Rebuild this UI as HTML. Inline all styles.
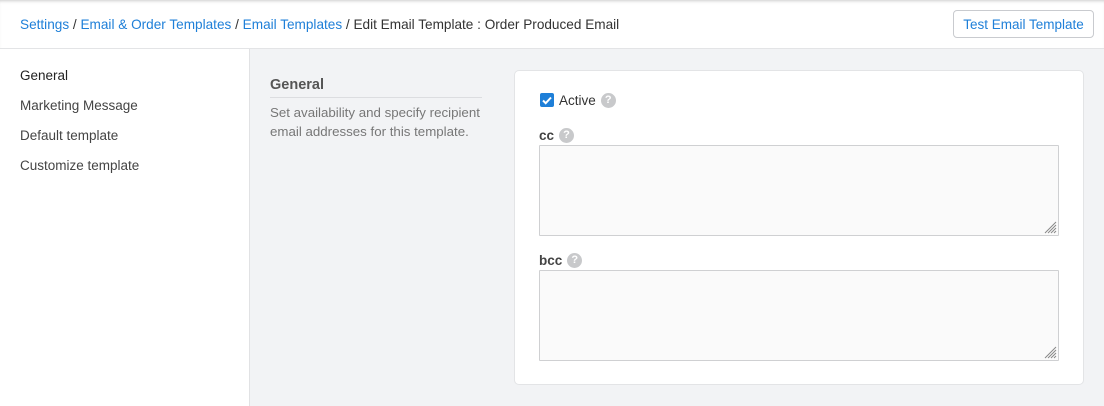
<!DOCTYPE html>
<html><head><style>
*{box-sizing:border-box;margin:0;padding:0}
body{width:1104px;height:406px;overflow:hidden;font-family:"Liberation Sans",sans-serif;font-size:13.5px;color:#333;background:#f2f3f5;position:relative}
.hdr{position:absolute;left:0;top:0;width:1104px;height:49px;background:#fff;border-bottom:1px solid #e3e4e6;box-shadow:inset 0 3px 3px -2px #ccc}
.bc{position:absolute;left:20px;top:17px;font-size:13.6px;color:#333;white-space:nowrap}
.bc a{color:#1e7fd8;text-decoration:none}
.btn{position:absolute;left:953px;top:10px;width:141px;height:28px;border:1px solid #c9cbcf;border-radius:4px;color:#1e7fd8;font-size:13.5px;text-align:center;line-height:28px;background:#fff}
.side{position:absolute;left:0;top:49px;width:250px;height:357px;background:#fff;border-right:1px solid #e1e2e4}
.side div{position:absolute;left:20px;font-size:13.5px;color:#444}
.sec{position:absolute;left:270px;top:77px;width:212px}
.sec h3{font-size:14.5px;font-weight:bold;color:#555;padding-bottom:4px;border-bottom:1px solid #dcdde0;width:212px}
.sec p{font-size:13.3px;color:#777;line-height:19px;margin-top:5px;width:220px}
.card{position:absolute;left:514px;top:70px;width:570px;height:315px;background:#fff;border:1px solid #e3e4e6;border-radius:5px}
.lbl{position:absolute;font-size:13.5px;color:#444;font-weight:bold;display:flex;align-items:center;height:16px}
.q{display:inline-block;width:15px;height:15px;border-radius:50%;background:#c8c9cb;color:#fff;font-size:11px;text-align:center;line-height:15px;font-weight:bold;margin-left:5px}
.ta{position:absolute;left:539px;width:520px;height:91px;border:1px solid #cfd0d2;background:#fafafa;border-radius:1px}
.ta svg{position:absolute;right:1px;bottom:1px}
.cb{position:absolute;left:540px;top:93px;width:14px;height:14px;background:#1e7fd8;border-radius:2px}
</style></head><body>
<div class="hdr">
<div class="bc"><a>Settings</a> / <a>Email &amp; Order Templates</a> / <a>Email Templates</a> / Edit Email Template : Order Produced Email</div>
<div class="btn">Test Email Template</div>
</div>
<div class="side">
<div style="top:19px;color:#222">General</div>
<div style="top:49px">Marketing Message</div>
<div style="top:79px">Default template</div>
<div style="top:109px">Customize template</div>
</div>
<div class="sec"><h3>General</h3><p>Set availability and specify recipient email addresses for this template.</p></div>
<div class="card"></div>
<div class="cb"><svg width="14" height="14"><path d="M3 7.5l2.7 2.7L11 4.5" stroke="#fff" stroke-width="2" fill="none"/></svg></div>
<div class="lbl" style="left:559px;top:92px;font-weight:normal;color:#333">Active<span class="q">?</span></div>
<div class="lbl" style="left:539px;top:127px">cc<span class="q">?</span></div>
<div class="ta" style="top:145px"><svg width="14" height="14"><path d="M13 2L2 13M13 5L5 13M13 8L8 13M13 11L11 13" stroke="#888" stroke-width="1"/></svg></div>
<div class="lbl" style="left:539px;top:252px">bcc<span class="q">?</span></div>
<div class="ta" style="top:270px"><svg width="14" height="14"><path d="M13 2L2 13M13 5L5 13M13 8L8 13M13 11L11 13" stroke="#888" stroke-width="1"/></svg></div>
</body></html>
